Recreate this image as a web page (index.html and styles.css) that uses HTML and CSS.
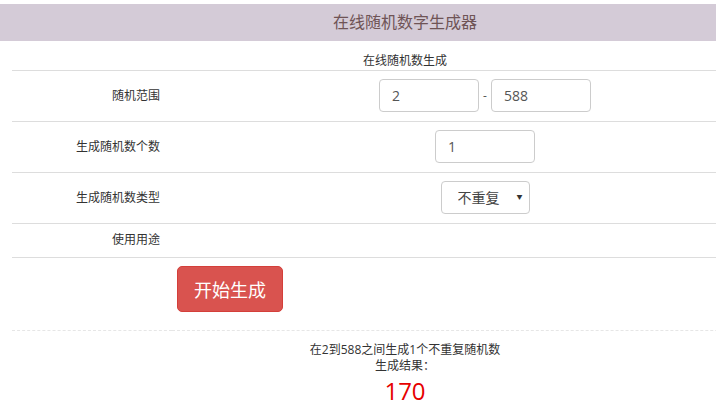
FILE: index.html
```html
<!DOCTYPE html>
<html lang="zh-CN">
<head>
    <meta charset="UTF-8">
    <title>在线随机数字生成器</title>
    <link rel="stylesheet" href="styles.css">
</head>
<body>
<div class="page">
    <div class="title-bar">在线随机数字生成器</div>

    <table class="gen-table">
        <tr>
            <td colspan="2" class="caption">在线随机数生成</td>
        </tr>
        <tr>
            <td class="label">随机范围</td>
            <td class="value">
                <input type="text" class="form-control" value="2">
                <span class="dash">-</span>
                <input type="text" class="form-control" value="588">
            </td>
        </tr>
        <tr>
            <td class="label">生成随机数个数</td>
            <td class="value">
                <input type="text" class="form-control" value="1">
            </td>
        </tr>
        <tr>
            <td class="label">生成随机数类型</td>
            <td class="value">
                <span class="select-wrap">
                    <select class="form-select">
                        <option>不重复</option>
                        <option>可重复</option>
                    </select>
                </span>
            </td>
        </tr>
        <tr class="short-row">
            <td class="label">使用用途</td>
            <td class="value"></td>
        </tr>
        <tr class="btn-row">
            <td></td>
            <td class="btn-cell">
                <button class="btn-red">开始生成</button>
            </td>
        </tr>
    </table>

    <div class="result">
        <div class="result-line">在2到588之间生成1个不重复随机数</div>
        <div class="result-line">生成结果：</div>
        <div class="result-num">170</div>
    </div>
</div>
</body>
</html>
```

FILE: styles.css
```css
html, body {
    margin: 0;
    overflow: hidden;
}

body {
    font-family: "Open Sans", "Noto Sans CJK SC", sans-serif;
    font-size: 12px;
    color: #333;
    padding-top: 4px;
}

.page {
    width: 810px;
}

.title-bar {
    height: 37px;
    line-height: 37px;
    background-color: #d4cbd7;
    color: #6f5456;
    font-size: 16px;
    text-align: center;
}

.gen-table {
    width: 786px;
    margin: 0 12px;
    border-collapse: collapse;
}

.gen-table td {
    border-bottom: 1px solid #ddd;
    padding: 8px 0 9px;
    line-height: 16px;
    vertical-align: middle;
}

.gen-table .caption {
    text-align: center;
    padding: 12px 0 1px;
}

.label {
    width: 148px;
    text-align: right;
    padding-right: 12px !important;
}

.value {
    text-align: center;
}

.form-control {
    width: 100px;
    height: 33px;
    box-sizing: border-box;
    border: 1px solid #ccc;
    border-radius: 4px;
    padding: 0 12px;
    font-family: "Open Sans", "Noto Sans CJK SC", sans-serif;
    font-size: 14px;
    color: #555;
    vertical-align: middle;
}

.dash {
    display: inline-block;
    margin: 0 1px;
    vertical-align: middle;
    color: #555;
}

.select-wrap {
    position: relative;
    display: inline-block;
    vertical-align: middle;
}

.form-select {
    appearance: none;
    -webkit-appearance: none;
    width: 89px;
    height: 33px;
    border: 1px solid #ccc;
    border-radius: 4px;
    background: #fff;
    padding: 0 0 0 16px;
    font-family: "Open Sans", "Noto Sans CJK SC", sans-serif;
    font-size: 14px;
    color: #444;
    display: block;
}

.select-wrap::after {
    content: "\25BC";
    position: absolute;
    right: 7px;
    top: 12px;
    font-size: 6px;
    line-height: 8px;
    color: #333;
    pointer-events: none;
}

.short-row .value {
    padding: 0;
}

.btn-row td {
    border-bottom: 1px dashed #e6e6e6;
    padding: 8px 0 18px;
}

.btn-cell {
    text-align: left;
    padding-left: 5px !important;
}

.btn-red {
    width: 106px;
    height: 46px;
    background-color: #d9534f;
    color: #fff;
    border: 1px solid #d43f3a;
    border-radius: 5px;
    font-family: "Open Sans", "Noto Sans CJK SC", sans-serif;
    font-size: 18px;
    cursor: pointer;
}

.result {
    text-align: center;
    padding-top: 11px;
}

.result-line {
    line-height: 16px;
}

.result-num {
    color: #e60000;
    font-size: 24px;
    line-height: 30px;
    margin-top: 2px;
}
```
